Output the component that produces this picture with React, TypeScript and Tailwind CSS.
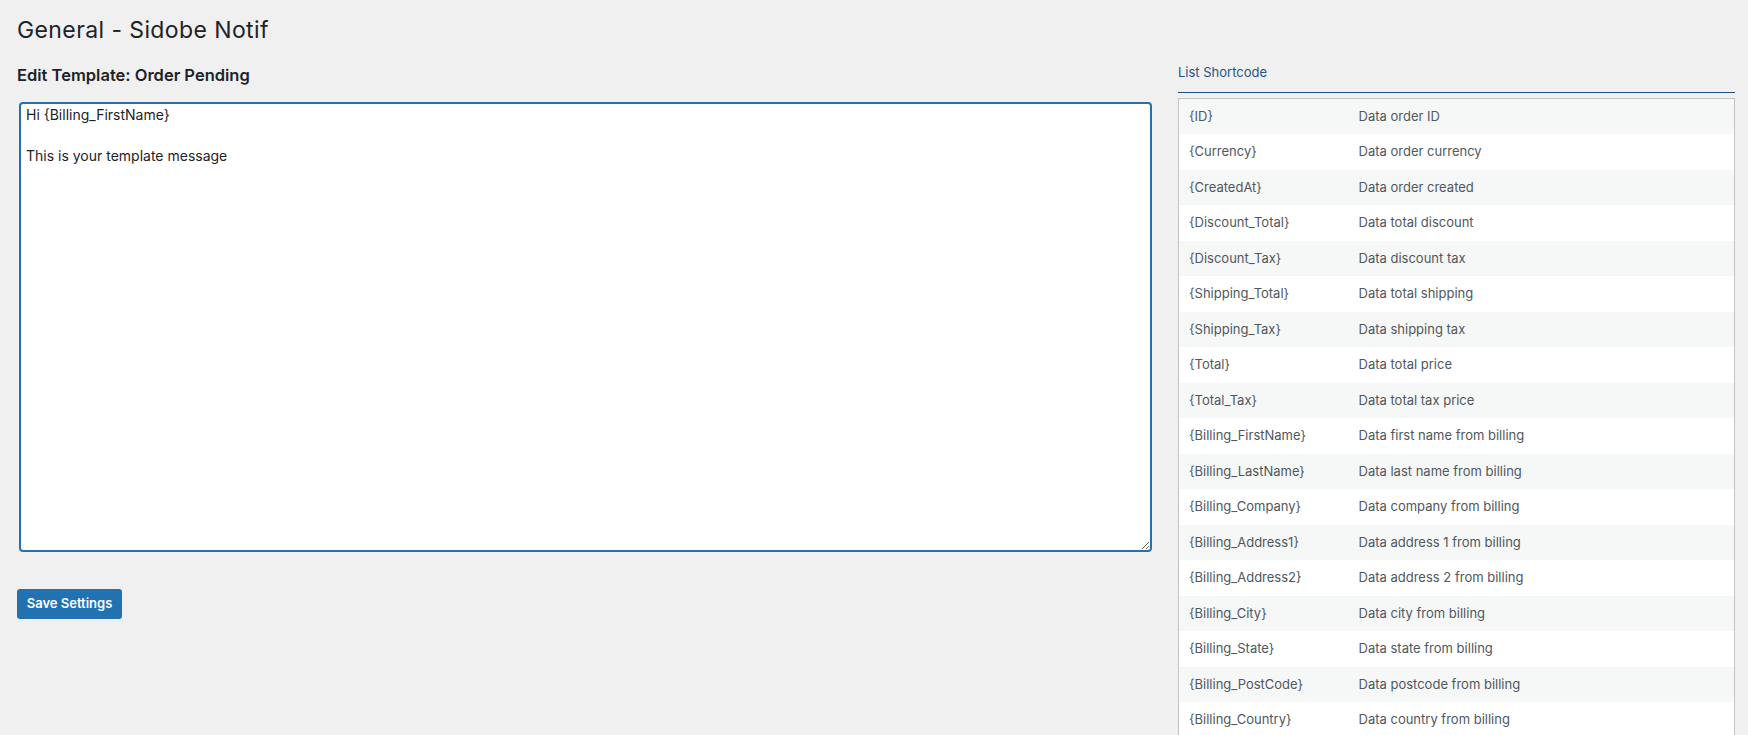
import React from "react";

const shortcodes: [string, string][] = [
  ["{ID}", "Data order ID"],
  ["{Currency}", "Data order currency"],
  ["{CreatedAt}", "Data order created"],
  ["{Discount_Total}", "Data total discount"],
  ["{Discount_Tax}", "Data discount tax"],
  ["{Shipping_Total}", "Data total shipping"],
  ["{Shipping_Tax}", "Data shipping tax"],
  ["{Total}", "Data total price"],
  ["{Total_Tax}", "Data total tax price"],
  ["{Billing_FirstName}", "Data first name from billing"],
  ["{Billing_LastName}", "Data last name from billing"],
  ["{Billing_Company}", "Data company from billing"],
  ["{Billing_Address1}", "Data address 1 from billing"],
  ["{Billing_Address2}", "Data address 2 from billing"],
  ["{Billing_City}", "Data city from billing"],
  ["{Billing_State}", "Data state from billing"],
  ["{Billing_PostCode}", "Data postcode from billing"],
  ["{Billing_Country}", "Data country from billing"],
];

const font = { fontFamily: "Inter, 'Noto Sans', 'Liberation Sans', sans-serif" };

export default function App() {
  return (
    <div
      className="h-[735px] overflow-hidden bg-[#f0f0f1] pl-[17px] pr-[13px] text-[#1d2327]"
      style={font}
    >
      <h1 className="pt-[16px] text-[23px] font-normal leading-[1.3] tracking-[0.4px]">
        General - Sidobe Notif
      </h1>

      <div className="grid grid-cols-[1136px_1fr] gap-[25px]">
        {/* editor column */}
        <div className="flex flex-col">
          <h2 className="mt-[18px] text-[16.5px] font-semibold leading-[22px]">
            Edit Template: Order Pending
          </h2>
          <textarea
            className="mt-[16px] ml-[2px] h-[450px] w-[1133px] resize-y rounded-[4px] border-2 border-[#2271b1] bg-white pl-[5px] pr-[3px] pt-[1px] text-[14px] leading-[20.5px] text-[#1d2327] outline-none"
            style={font}
            defaultValue={"Hi {Billing_FirstName}\n\nThis is your template message"}
          />
          <div className="mt-[37px]">
            <button className="h-[30px] w-[105px] rounded-[3px] bg-[#2271b1] text-[13px] font-semibold text-white">
              Save Settings
            </button>
          </div>
        </div>

        {/* shortcode reference column */}
        <div className="flex flex-col">
          <div className="border-b border-[#1d4f80] pt-[13px] pb-[9px]">
            <span className="text-[13px] font-normal leading-[19.5px] text-[#1f5787]">List Shortcode</span>
          </div>
          <table className="mt-[5px] w-full border-collapse border border-[#c3c4c7] bg-white text-[13px] leading-[19.5px] text-[#50575e]">
            <tbody>
              {shortcodes.map(([code, desc], i) => (
                <tr key={code} className={i % 2 === 0 ? "bg-[#f6f7f7]" : "bg-white"}>
                  <td className="w-[170px] px-[10px] py-[8px]">{code}</td>
                  <td className="px-[10px] py-[8px]">{desc}</td>
                </tr>
              ))}
            </tbody>
          </table>
        </div>
      </div>
    </div>
  );
}
